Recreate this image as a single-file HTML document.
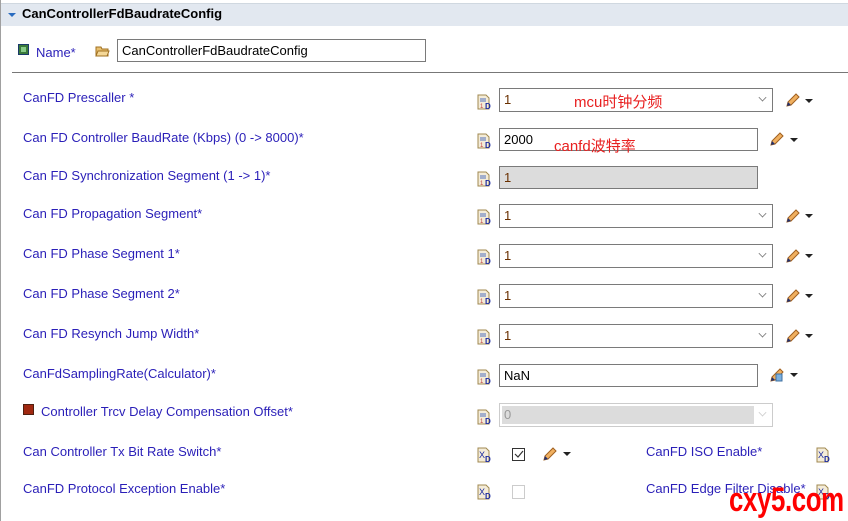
<!DOCTYPE html>
<html><head><meta charset="utf-8"><style>
*{margin:0;padding:0;box-sizing:border-box}
body{width:848px;height:521px;background:#fff;position:relative;overflow:hidden;font-family:"Liberation Sans","Noto Sans CJK SC",sans-serif;font-size:13px}
.a{position:absolute;white-space:nowrap}
.lbl{color:#2a1fb8;font-size:13px}
.box{position:absolute;border:1px solid #7a7a7a;background:#fff;height:24px;padding-left:4px;line-height:22px;color:#000;font-size:13px}
.num{color:#6a3000}
.chev{position:absolute;right:6px;top:5px;width:7px;height:7px;border-right:1px solid #777;border-bottom:1px solid #777;transform:rotate(45deg) scale(.8)}
.ic{position:absolute;width:14px;height:16px}
.tri{position:absolute;width:0;height:0;border-left:4px solid transparent;border-right:4px solid transparent;border-top:4px solid #222}
</style></head><body>
<div class="a" style="left:0;top:0;width:1px;height:521px;background:#a0a0a0"></div>
<div class="a" style="left:1px;top:3px;width:847px;height:23px;background:#e2e8f0;border-top:1px solid #d0d8e0"></div>
<div class="tri" style="left:8px;top:13px;border-top-color:#2a6cc0"></div>
<div class="a" style="left:22px;top:6px;font-weight:bold;font-size:13px;color:#000">CanControllerFdBaudrateConfig</div>

<svg class="a" style="left:18px;top:44px" width="11" height="11"><rect x=".5" y=".5" width="10" height="10" fill="#3a7a3a" stroke="#1a3a6a"/><rect x="3" y="3" width="5" height="5" fill="#8c8"/></svg>
<div class="a lbl" style="left:36px;top:45px">Name*</div>
<svg class="a" style="left:95px;top:45px" width="15" height="12"><path d="M1 2h5l1 2h6v7H1z" fill="#e8c070" stroke="#a07020"/><path d="M3 6h11l-2 5H1z" fill="#f5d898" stroke="#a07020"/></svg>
<div class="box" style="left:117px;top:39px;width:309px;height:23px;line-height:21px">CanControllerFdBaudrateConfig</div>
<div class="a" style="left:12px;top:72px;width:836px;height:1px;background:#777"></div>

<div class="a lbl" style="left:23px;top:90px">CanFD Prescaller *</div>
<div class="a lbl" style="left:23px;top:130px">Can FD Controller BaudRate (Kbps) (0 -&gt; 8000)*</div>
<div class="a lbl" style="left:23px;top:168px">Can FD Synchronization Segment (1 -&gt; 1)*</div>
<div class="a lbl" style="left:23px;top:206px">Can FD Propagation Segment*</div>
<div class="a lbl" style="left:23px;top:246px">Can FD Phase Segment 1*</div>
<div class="a lbl" style="left:23px;top:286px">Can FD Phase Segment 2*</div>
<div class="a lbl" style="left:23px;top:326px">Can FD Resynch Jump Width*</div>
<div class="a lbl" style="left:23px;top:366px">CanFdSamplingRate(Calculator)*</div>
<div class="a" style="left:23px;top:404px;width:11px;height:11px;background:#a02810;border:1px solid #502010"></div>
<div class="a lbl" style="left:41px;top:404px">Controller Trcv Delay Compensation Offset*</div>
<div class="a lbl" style="left:23px;top:444px">Can Controller Tx Bit Rate Switch*</div>
<div class="a lbl" style="left:23px;top:481px">CanFD Protocol Exception Enable*</div>
<div class="a lbl" style="left:646px;top:444px">CanFD ISO Enable*</div>
<div class="a lbl" style="left:646px;top:481px">CanFD Edge Filter Disable*</div>

<svg width="0" height="0" style="position:absolute"><defs>
<g id="di"><path d="M1 1h8l3 3v11H1z" fill="#f4ecd8" stroke="#a08850"/><path d="M3 5h6M3 7h6" stroke="#5070c0"/><text x="3" y="14" font-size="6" fill="#c04040" font-family="Liberation Sans">1</text><text x="8" y="15" font-size="8" font-weight="bold" fill="#1a2aa0" font-family="Liberation Sans">D</text></g>
<g id="xi"><path d="M1 1h8l3 3v11H1z" fill="#f4ecd8" stroke="#a08850"/><text x="2" y="11" font-size="9" fill="#1a2aa0" font-family="Liberation Sans">X</text><text x="8" y="15" font-size="8" font-weight="bold" fill="#1a2aa0" font-family="Liberation Sans">D</text></g>
<g id="pen"><path d="M3 14l1-4 8-8 3 3-8 8z" fill="#f0b060" stroke="#a06020"/><path d="M3 14l1-4 3 3z" fill="#203070"/></g>
</defs></svg>
<svg class="ic" style="left:477px;top:94px"><use href="#di"/></svg>
<svg class="ic" style="left:477px;top:133px"><use href="#di"/></svg>
<svg class="ic" style="left:477px;top:171px"><use href="#di"/></svg>
<svg class="ic" style="left:477px;top:209px"><use href="#di"/></svg>
<svg class="ic" style="left:477px;top:249px"><use href="#di"/></svg>
<svg class="ic" style="left:477px;top:289px"><use href="#di"/></svg>
<svg class="ic" style="left:477px;top:329px"><use href="#di"/></svg>
<svg class="ic" style="left:477px;top:369px"><use href="#di"/></svg>
<svg class="ic" style="left:477px;top:409px"><use href="#di"/></svg>
<svg class="ic" style="left:477px;top:447px"><use href="#xi"/></svg>
<svg class="ic" style="left:477px;top:484px"><use href="#xi"/></svg>
<svg class="ic" style="left:816px;top:447px"><use href="#xi"/></svg>
<svg class="ic" style="left:816px;top:484px"><use href="#xi"/></svg>

<div class="box" style="left:499px;top:88px;width:274px"><span class="num">1</span><i class="chev"></i></div>
<div class="a" style="left:574px;top:91px;color:#e82020;font-size:15px">mcu时钟分频</div>
<div class="box" style="left:499px;top:128px;width:259px;height:23px;line-height:21px">2000</div>
<div class="a" style="left:554px;top:135px;color:#e82020;font-size:15px">canfd波特率</div>
<div class="box" style="left:499px;top:166px;width:259px;height:23px;line-height:21px;background:#dcdcdc"><span class="num">1</span></div>
<div class="box" style="left:499px;top:204px;width:274px"><span class="num">1</span><i class="chev"></i></div>
<div class="box" style="left:499px;top:244px;width:274px"><span class="num">1</span><i class="chev"></i></div>
<div class="box" style="left:499px;top:284px;width:274px"><span class="num">1</span><i class="chev"></i></div>
<div class="box" style="left:499px;top:324px;width:274px"><span class="num">1</span><i class="chev"></i></div>
<div class="box" style="left:499px;top:364px;width:259px;height:23px;line-height:21px">NaN</div>
<div class="box" style="left:499px;top:403px;width:274px;border-color:#ccc;padding:2px"><div style="background:#dcdcdc;width:252px;height:18px;line-height:18px;padding-left:2px;color:#999">0</div><i class="chev" style="border-color:#ccc"></i></div>

<svg class="ic" style="left:784px;top:92px;width:16px"><use href="#pen"/></svg><div class="tri" style="left:805px;top:99px"></div>
<svg class="ic" style="left:768px;top:131px;width:16px"><use href="#pen"/></svg><div class="tri" style="left:790px;top:138px"></div>
<svg class="ic" style="left:784px;top:208px;width:16px"><use href="#pen"/></svg><div class="tri" style="left:805px;top:214px"></div>
<svg class="ic" style="left:784px;top:248px;width:16px"><use href="#pen"/></svg><div class="tri" style="left:805px;top:254px"></div>
<svg class="ic" style="left:784px;top:288px;width:16px"><use href="#pen"/></svg><div class="tri" style="left:805px;top:294px"></div>
<svg class="ic" style="left:784px;top:328px;width:16px"><use href="#pen"/></svg><div class="tri" style="left:805px;top:334px"></div>
<svg class="ic" style="left:768px;top:367px;width:16px"><use href="#pen"/><rect x="8" y="7" width="6" height="7" fill="#7ab0e0" stroke="#4070a0"/></svg><div class="tri" style="left:790px;top:373px"></div>

<div class="a" style="left:512px;top:448px;width:13px;height:13px;border:1px solid #333;background:#fff"></div>
<svg class="a" style="left:512px;top:448px" width="13" height="13"><path d="M3 6l3 3 5-6" fill="none" stroke="#333" stroke-width="1.2"/></svg>
<svg class="ic" style="left:541px;top:446px;width:16px"><use href="#pen"/></svg><div class="tri" style="left:563px;top:452px"></div>
<div class="a" style="left:512px;top:485px;width:13px;height:14px;border:1px solid #ccc;background:#fff"></div>

<div class="a" style="left:729px;top:482px;width:118px;height:36px;overflow:visible">
<div style="color:#f00;font-size:34px;font-weight:bold;line-height:36px;transform:scaleX(0.76);transform-origin:left top;letter-spacing:-0.5px">cxy5.com</div></div>
</body></html>
